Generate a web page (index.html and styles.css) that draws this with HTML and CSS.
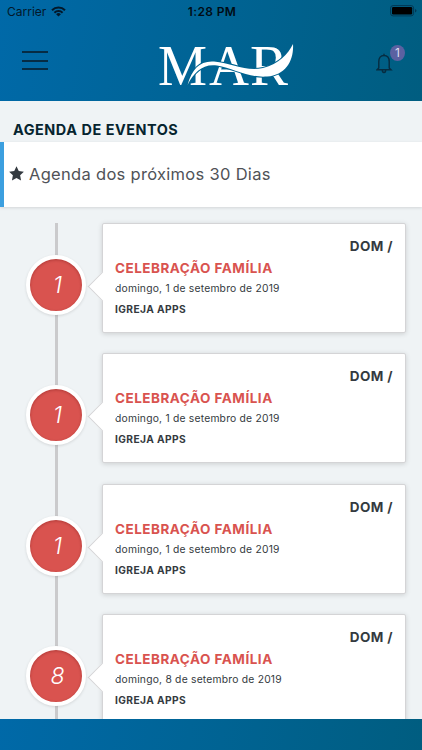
FILE: index.html
```html
<!DOCTYPE html>
<html lang="pt-BR">
<head>
    <meta charset="UTF-8">
    <title>Agenda de Eventos</title>
    <link rel="stylesheet" href="styles.css">
</head>
<body>
    <header class="header">
        <div class="status">
            <div class="carrier">
                <span>Carrier</span>
                <svg width="15" height="11" viewBox="0 0 15 11" fill="none" stroke="#03182a" stroke-width="2">
                    <path d="M1 4.2a9.2 9.2 0 0 1 13 0M3.4 6.7a5.9 5.9 0 0 1 8.2 0"/>
                    <path d="M7.5 10.6L5.1 8.2a3.5 3.5 0 0 1 4.8 0z" fill="#03182a" stroke="none"/>
                </svg>
            </div>
            <div class="time">1:28 PM</div>
            <svg class="battery" width="27" height="12" viewBox="0 0 27 12">
                <rect x=".6" y=".6" width="23" height="10.3" rx="2.5" fill="none" stroke="#023854"/>
                <rect x="2" y="2" width="20.2" height="7.5" rx="1.2" fill="#000"/>
                <path d="M25 4v3.6q1.5-.5 1.5-1.8T25 4z" fill="#023854"/>
            </svg>
        </div>
        <div class="navbar">
            <div class="menu"><span></span><span></span><span></span></div>
            <svg class="logo" width="140" height="76" viewBox="0 -16 140 76">
                <g class="logo-text">
                    <text x="1" y="43" textLength="49" lengthAdjust="spacingAndGlyphs">M</text>
                    <text x="52" y="43" textLength="40" lengthAdjust="spacingAndGlyphs">A</text>
                    <text x="93" y="43" textLength="38" lengthAdjust="spacingAndGlyphs">R</text>
                </g>
                <path d="M30.500 43C35 27 43 18.500 57 19.500C75 21 89 30 106 26C122 22 131 12 136 2C137 18 129 33 110 34.500C91 36 76 26 60 23.500C46 21.500 37 30 30.500 43z" fill="#fff" stroke="#00638f" stroke-width="2.2" paint-order="stroke"/>
            </svg>
            <div class="bell">
                <svg width="17" height="21" viewBox="0 0 17 21" fill="none" stroke="#062c40" stroke-width="1.4">
                    <path d="M8 2.500C4.500 2.500 2.800 4.800 2.800 8.500V15L1 16.700H15L13.200 15V8.500C13.200 4.800 11.500 2.500 8 2.500zM8 .8v1.7M6.300 17a1.700 2.500 0 0 0 3.400 0"/>
                </svg>
                <span class="badge">1</span>
            </div>
        </div>
    </header>

    <main class="content">
        <h1>AGENDA DE EVENTOS</h1>
        <div class="callout">
            <svg width="15" height="15" viewBox="0 0 24 24" fill="#343a40"><path d="M12 .5l3.600 7.500 8.200 1.100-6 5.700 1.500 8.200-7.300-4-7.300 4 1.500-8.200-6-5.700L8.400 8z"/></svg>
            <span>Agenda dos próximos 30 Dias</span>
        </div>

        <div class="timeline">
            <div class="item">
                <div class="circle">1</div>
                <div class="card">
                    <p class="day">DOM /</p>
                    <h2>CELEBRAÇÃO FAMÍLIA</h2>
                    <p class="date">domingo, 1 de setembro de 2019</p>
                    <p class="place">IGREJA APPS</p>
                </div>
            </div>
            <div class="item">
                <div class="circle">1</div>
                <div class="card">
                    <p class="day">DOM /</p>
                    <h2>CELEBRAÇÃO FAMÍLIA</h2>
                    <p class="date">domingo, 1 de setembro de 2019</p>
                    <p class="place">IGREJA APPS</p>
                </div>
            </div>
            <div class="item">
                <div class="circle">1</div>
                <div class="card">
                    <p class="day">DOM /</p>
                    <h2>CELEBRAÇÃO FAMÍLIA</h2>
                    <p class="date">domingo, 1 de setembro de 2019</p>
                    <p class="place">IGREJA APPS</p>
                </div>
            </div>
            <div class="item">
                <div class="circle">8</div>
                <div class="card">
                    <p class="day">DOM /</p>
                    <h2>CELEBRAÇÃO FAMÍLIA</h2>
                    <p class="date">domingo, 8 de setembro de 2019</p>
                    <p class="place">IGREJA APPS</p>
                </div>
            </div>
        </div>
    </main>

    <footer class="footer"></footer>
</body>
</html>
```

FILE: styles.css
```css
* {
    box-sizing: border-box;
}
body {
    margin: 0;
    height: 750px;
    display: flex;
    flex-direction: column;
    overflow: hidden;
    font-family: Inter, "Open Sans", sans-serif;
    background: #eff3f5;
    color: #343a40;
}
h1, h2, p {
    margin: 0;
}
.header, .footer {
    flex: none;
    background: linear-gradient(100deg, #0069a8 0%, #006496 45%, #005d80 100%);
}
.header {
    height: 101px;
}
.status {
    height: 22px;
    display: grid;
    grid-template-columns: 1fr auto 1fr;
    align-items: center;
    padding: 0 5px 0 7px;
    font-size: 12px;
    color: #03182a;
}
.carrier {
    display: flex;
    align-items: center;
    gap: 5px;
}
.time {
    font-weight: 600;
    font-size: 12px;
    letter-spacing: 0.35px;
    color: #000c14;
}
.battery {
    justify-self: end;
}
.navbar {
    height: 79px;
    display: flex;
    align-items: center;
    padding-left: 22px;
}
.menu {
    width: 26px;
    display: grid;
    gap: 6.7px;
    margin-bottom: 2px;
}
.menu span {
    height: 2px;
    background: #062c44;
}
.logo {
    margin-top: 5px;
    margin-left: 109px;
}
.logo-text {
    font-family: "Liberation Serif", serif;
    font-size: 57px;
    fill: #fff;
}
.bell {
    position: relative;
    height: 21px;
    margin-top: 3px;
    margin-left: 79px;
}
.badge {
    position: absolute;
    left: 14px;
    top: -8px;
    width: 15px;
    height: 16px;
    border-radius: 50%;
    background: #5b61a1;
    color: #dcdff0;
    font-size: 12px;
    line-height: 16px;
    text-align: center;
}
.content {
    flex: 1;
    min-height: 0;
    overflow: hidden;
}
h1 {
    height: 41px;
    padding: 20px 0 0 13px;
    font-size: 14.4px;
    line-height: 18px;
    font-weight: 700;
    letter-spacing: 0.55px;
    color: #06242f;
}
.callout {
    height: 65px;
    display: flex;
    align-items: center;
    gap: 5px;
    padding: 0 0 2px 5px;
    border-left: 4px solid #3c9fdf;
    background: #fff;
    box-shadow: 0 1px 3px rgba(0, 0, 0, 0.12);
    font-size: 16.5px;
    letter-spacing: 0.3px;
    color: #505257;
}
.timeline {
    margin-top: 16px;
    background: linear-gradient(#cacacc, #cacacc) 55px 0 / 3px 100% no-repeat;
}
.item {
    display: flex;
    align-items: center;
    gap: 16px;
    padding: 0 16px 20.4px 26px;
}
.circle {
    flex: none;
    width: 60px;
    height: 60px;
    margin-top: 14px;
    padding-left: 3px;
    border: 4px solid #fff;
    border-radius: 50%;
    background: #d9534f;
    box-shadow: 0 1px 3px rgba(0, 0, 0, 0.12), inset 0 1px 3px rgba(80, 0, 0, 0.3);
    color: #fff;
    font-size: 23px;
    font-weight: 300;
    font-style: italic;
    line-height: 52px;
    text-align: center;
}
.card {
    position: relative;
    flex: 1;
    height: 110px;
    padding: 13px 12px 0 12px;
    border: 1px solid #d4d4d6;
    border-radius: 2px;
    background: #fff;
    box-shadow: 0 1px 5px rgba(0, 0, 0, 0.15);
}
/* arrow towards the circle */
.card::before {
    content: "";
    position: absolute;
    left: -11px;
    top: 52px;
    width: 20px;
    height: 20px;
    border-left: 1px solid #d4d4d6;
    border-bottom: 1px solid #d4d4d6;
    background: #fff;
    transform: rotate(45deg);
}
.day {
    text-align: right;
    font-size: 13.5px;
    line-height: 18px;
    font-weight: 700;
    letter-spacing: 0.4px;
}
.card h2 {
    margin-top: 4px;
    font-size: 13.5px;
    line-height: 18px;
    font-weight: 700;
    letter-spacing: 0.5px;
    color: #d9534f;
}
.date {
    margin-top: 3px;
    font-size: 10.3px;
    line-height: 16px;
    letter-spacing: 0.22px;
}
.place {
    margin-top: 5px;
    font-size: 10.2px;
    line-height: 16px;
    font-weight: 700;
    letter-spacing: 0.4px;
}
.footer {
    height: 31px;
}
```
